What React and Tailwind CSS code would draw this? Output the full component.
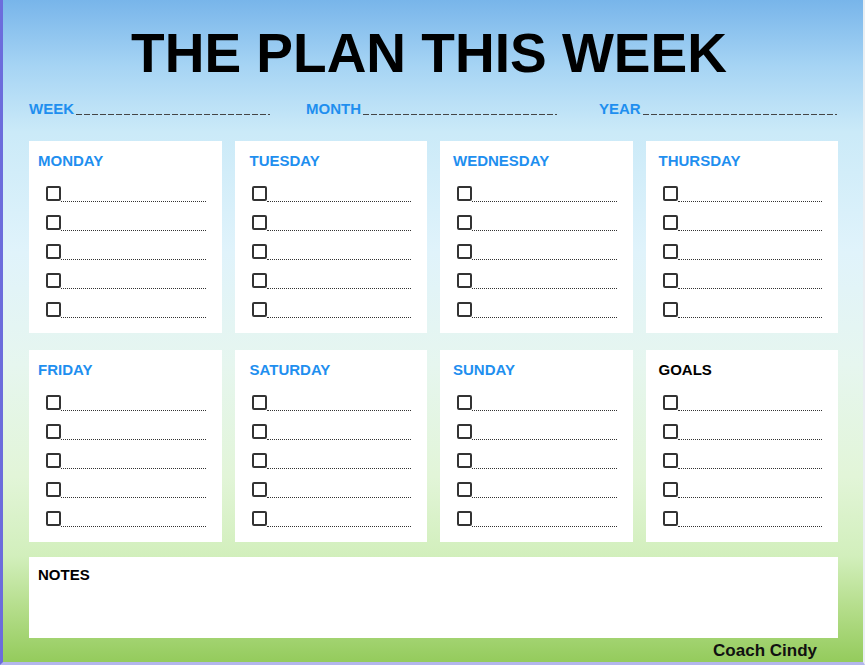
const days = [
  { label: "MONDAY", color: "text-[#1f8fef]", pad: "pl-[9px]" },
  { label: "TUESDAY", color: "text-[#1f8fef]", pad: "pl-[15px]" },
  { label: "WEDNESDAY", color: "text-[#1f8fef]", pad: "pl-[13px]" },
  { label: "THURSDAY", color: "text-[#1f8fef]", pad: "pl-[13px]" },
  { label: "FRIDAY", color: "text-[#1f8fef]", pad: "pl-[9px]" },
  { label: "SATURDAY", color: "text-[#1f8fef]", pad: "pl-[15px]" },
  { label: "SUNDAY", color: "text-[#1f8fef]", pad: "pl-[13px]" },
  { label: "GOALS", color: "text-black", pad: "pl-[13px]" },
];

const Field = ({ label }) => (
  <div className="flex items-end">
    <span className="text-[15px] leading-[20px] font-bold text-[#1f8fef]">{label}</span>
    <span className="w-[194px] h-[1.5px] mb-[4px] ml-[2px] bg-[repeating-linear-gradient(90deg,#454545_0_6px,transparent_6px_8px)]"></span>
  </div>
);

const DayCard = ({ label, color, pad }) => (
  <div className="bg-white h-[192px] pr-[16px] pt-[10px]">
    <h2 className={`text-[15px] leading-[19px] font-bold ${color} ${pad}`}>{label}</h2>
    <ul className="mt-[16px] flex flex-col gap-[14px] pl-[17px]">
      {[0, 1, 2, 3, 4].map((i) => (
        <li key={i} className="flex items-end h-[15px]">
          <span className="w-[15px] h-[15px] shrink-0 border-2 border-[#333] rounded-[2px]"></span>
          <span className="flex-1 border-b border-dotted border-[#333] mb-[-1px]"></span>
        </li>
      ))}
    </ul>
  </div>
);

export default function App() {
  return (
    <div
      className="w-[865px] h-[665px] overflow-hidden border-l-[3px] border-[#6c6cdc] border-b-[3px] border-b-[#b3b6ec] border-r-[2px] border-r-[#e9eef2] bg-[linear-gradient(180deg,#78b5ea_0%,#a6d4f4_10%,#cbeaf8_20%,#e0f3fb_38%,#e6f6ef_55%,#e2f5d8_72%,#d2efbc_84%,#b4dd8a_92%,#94cb5c_100%)]"
      style={{ fontFamily: "'Liberation Sans', Arial, sans-serif" }}
    >
      <h1 className="pt-[26px] text-center text-[55px] leading-[55px] font-bold text-black pr-[8px]">
        THE PLAN THIS WEEK
      </h1>

      <div className="mt-[18px] grid grid-cols-[277px_293px_1fr] pl-[26px]">
        <Field label="WEEK" />
        <Field label="MONTH" />
        <Field label="YEAR" />
      </div>

      <div className="mt-[22px] grid grid-cols-4 gap-x-[13px] gap-y-[17px] pl-[26px] pr-[25px]">
        {days.map((d) => (
          <DayCard key={d.label} label={d.label} color={d.color} pad={d.pad} />
        ))}
      </div>

      <div className="mt-[15px] ml-[26px] mr-[25px] h-[81px] bg-white pl-[9px] pt-[9px]">
        <h2 className="text-[15px] leading-[18px] font-bold text-black">NOTES</h2>
      </div>

      <div className="flex justify-end pr-[46px] pt-[3px]">
        <span className="text-[17px] leading-[20px] font-bold text-[#111]">Coach Cindy</span>
      </div>
    </div>
  );
}
